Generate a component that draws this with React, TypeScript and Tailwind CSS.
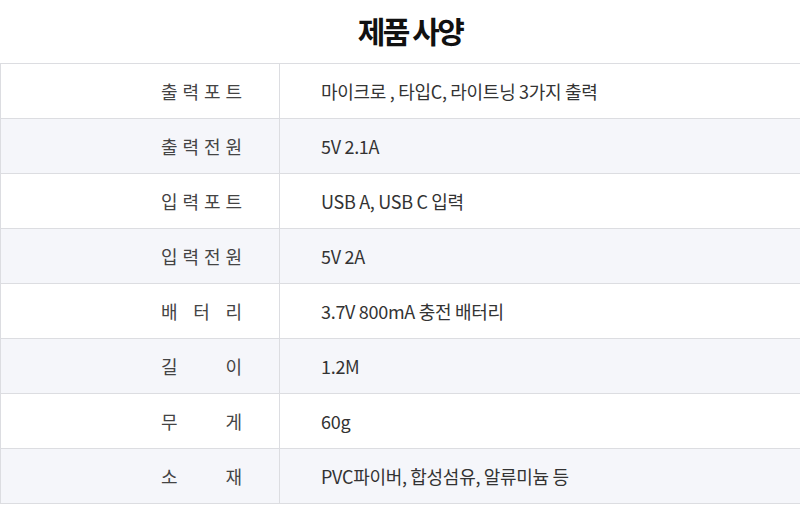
const rows: { label: string[]; value: string }[] = [
  { label: ["출", "력", "포", "트"], value: "마이크로 , 타입C, 라이트닝 3가지 출력" },
  { label: ["출", "력", "전", "원"], value: "5V 2.1A" },
  { label: ["입", "력", "포", "트"], value: "USB A, USB C 입력" },
  { label: ["입", "력", "전", "원"], value: "5V 2A" },
  { label: ["배", "터", "리"], value: "3.7V 800mA 충전 배터리" },
  { label: ["길", "이"], value: "1.2M" },
  { label: ["무", "게"], value: "60g" },
  { label: ["소", "재"], value: "PVC파이버, 합성섬유, 알류미늄 등" },
];

export default function App() {
  return (
    <div
      className="w-[800px] h-[514px] bg-white text-[#333]"
      style={{ fontFamily: '"Noto Sans CJK KR", "Noto Sans", sans-serif' }}
    >
      {/* Title */}
      <div className="h-[63px] flex items-center justify-center">
        <h1 className="text-[30px] font-bold tracking-[-2.5px] text-[#111] leading-none pl-[20px] pb-[3px]">
          제품 사양
        </h1>
      </div>

      {/* Spec table */}
      <div className="border-t border-l border-[#dcdde1]">
        {rows.map((row, i) => (
          <div
            key={i}
            className={`flex h-[55px] border-b border-[#dcdde1] ${
              i % 2 === 1 ? "bg-[#f5f6fa]" : "bg-white"
            }`}
          >
            <div className="w-[279px] flex items-center justify-end pr-[37px] border-r border-[#dcdde1]">
              <div className="w-[81px] flex justify-between text-[18px] text-[#444] leading-none">
                {row.label.map((ch, j) => (
                  <span key={j}>{ch}</span>
                ))}
              </div>
            </div>
            <div className="flex-1 flex items-center pl-[41px] text-[18px] tracking-[-0.3px] text-[#333] leading-none">
              {row.value}
            </div>
          </div>
        ))}
      </div>
    </div>
  );
}
